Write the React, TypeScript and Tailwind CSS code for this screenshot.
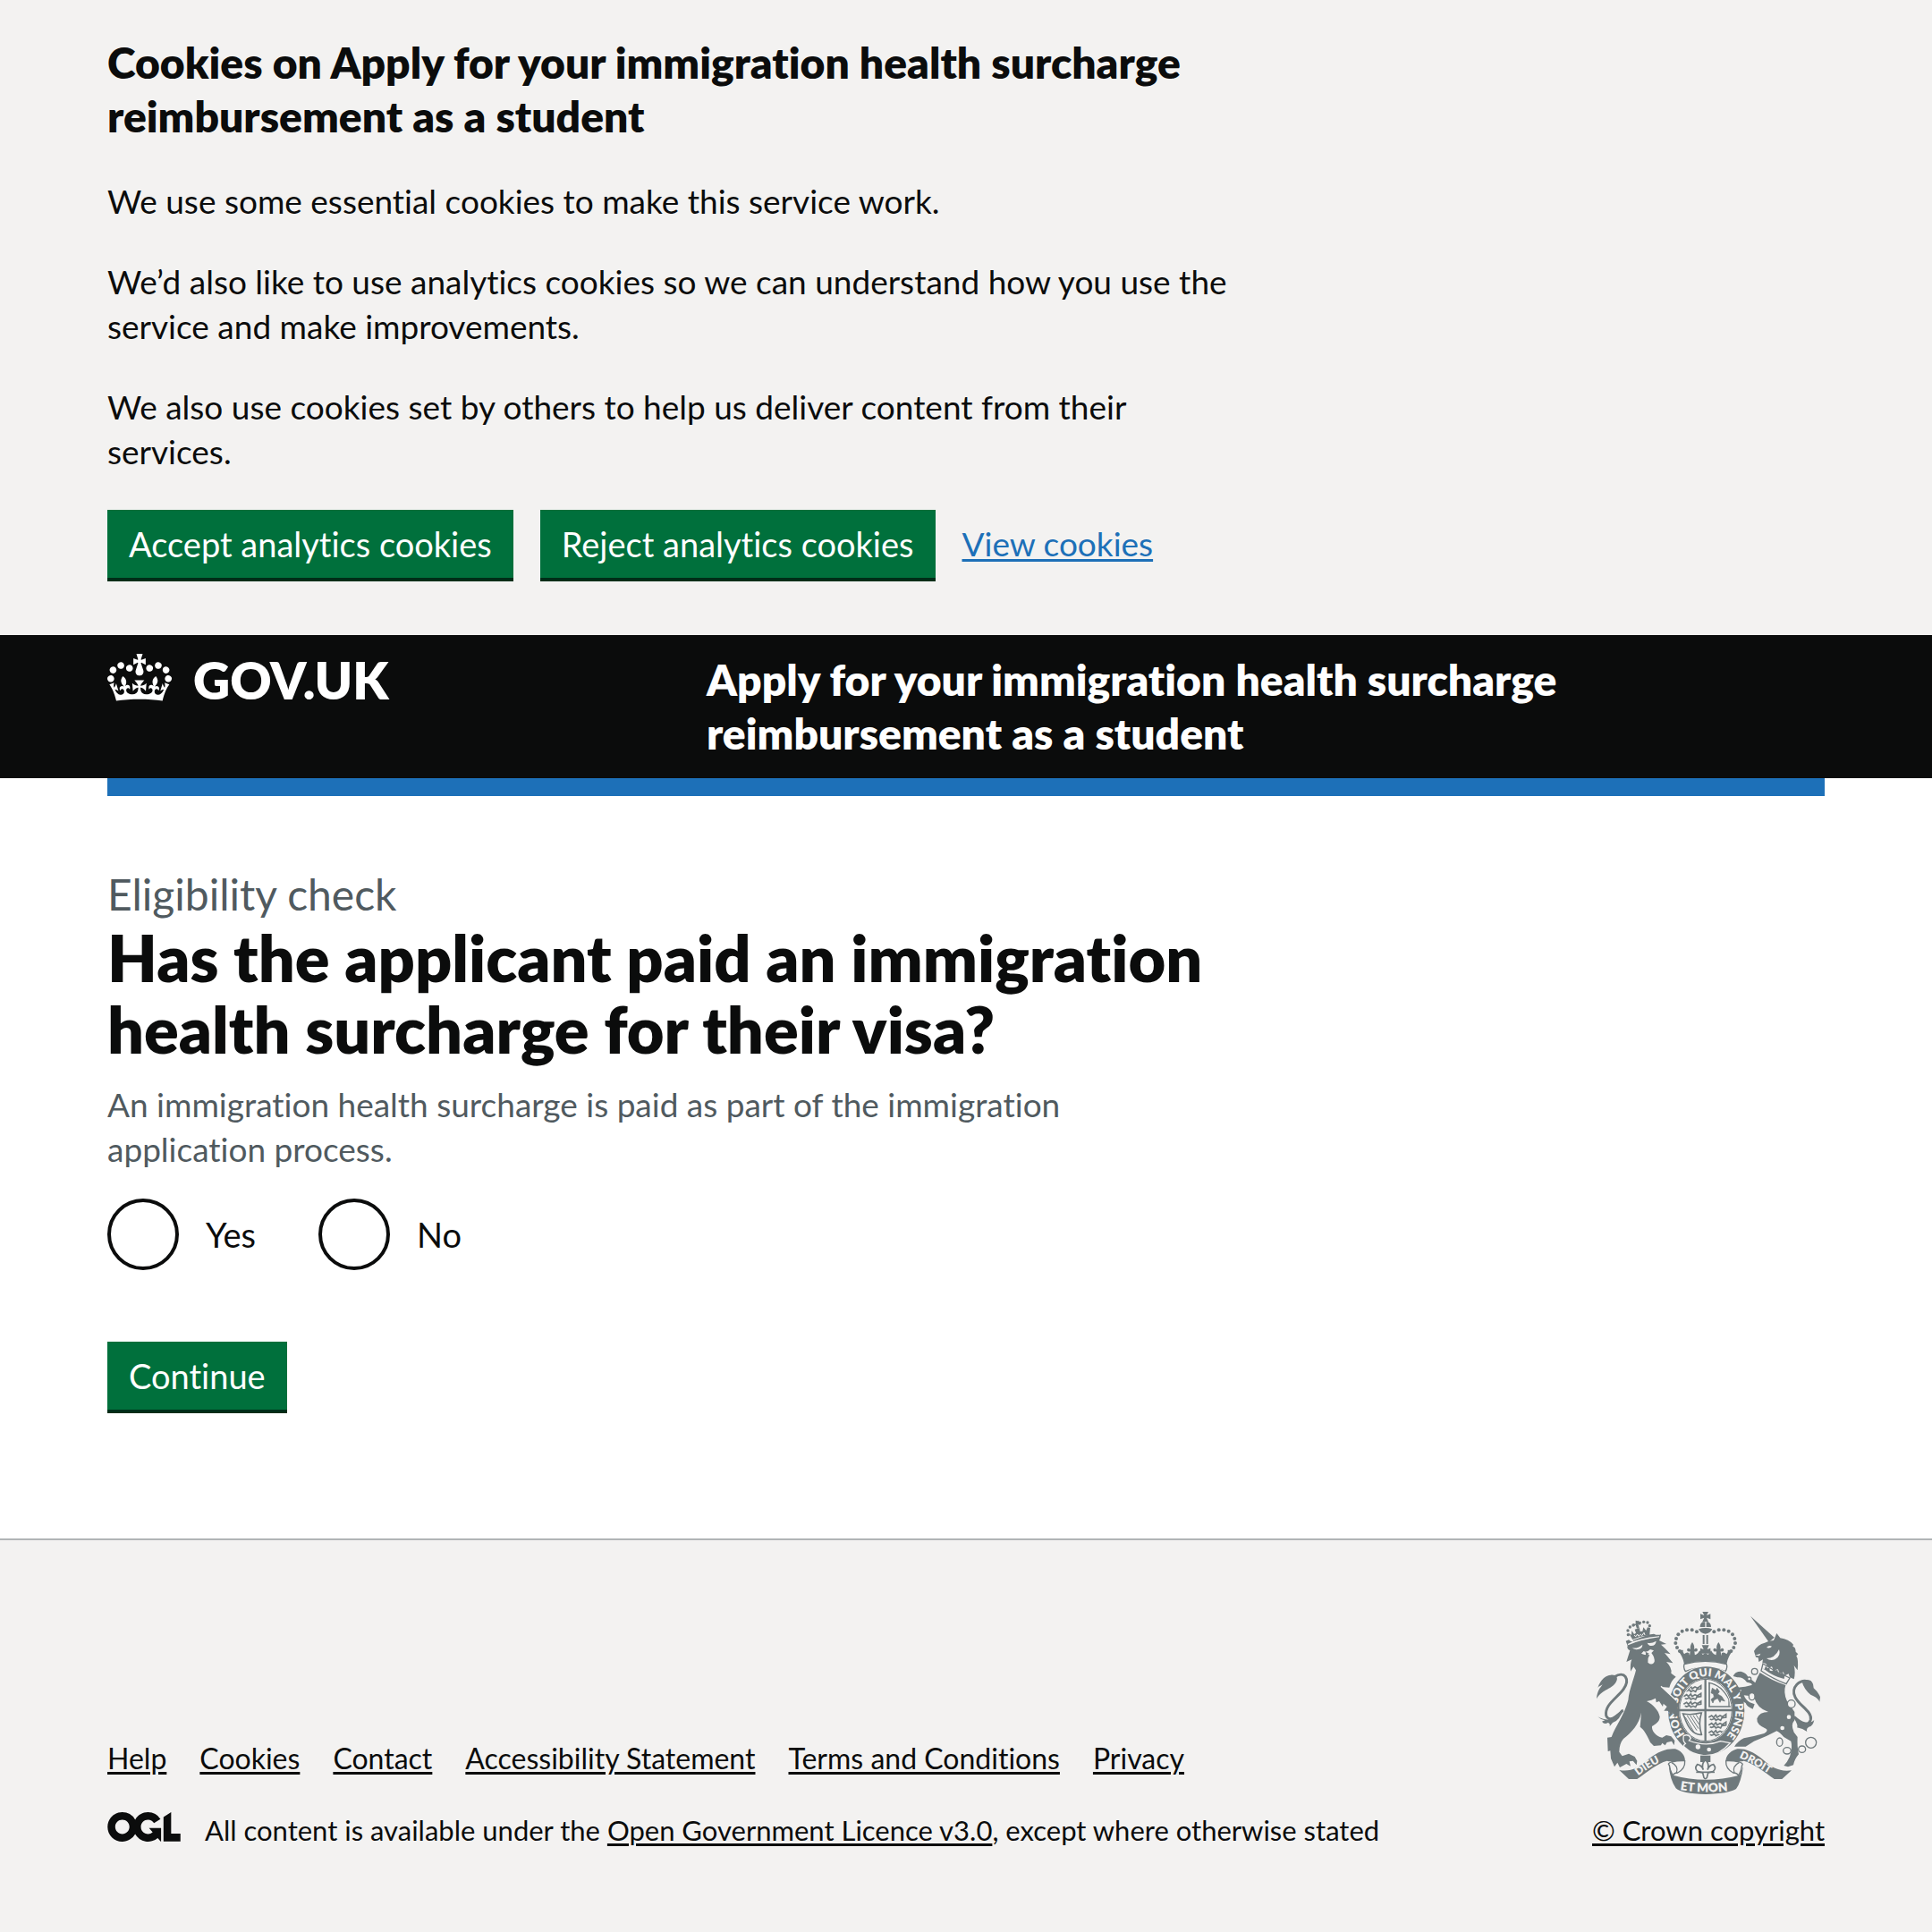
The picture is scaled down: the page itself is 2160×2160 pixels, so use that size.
import type { ReactNode } from "react";

const CROWN =
  "M25 30.2c3.5 1.5 7.7-.2 9.1-3.7 1.5-3.6-.2-7.8-3.9-9.2-3.6-1.4-7.6.3-9.1 3.9-1.4 3.5.3 7.5 3.9 9zM9 39.5c3.6 1.5 7.8-.2 9.2-3.7 1.5-3.6-.2-7.8-3.9-9.1-3.6-1.5-7.6.2-9.1 3.8-1.4 3.5.3 7.5 3.8 9zM4.4 57.2c3.5 1.5 7.7-.2 9.1-3.8 1.5-3.6-.2-7.7-3.9-9.1-3.5-1.5-7.6.3-9.1 3.8-1.4 3.5.3 7.6 3.9 9.1zm38.3-21.4c3.5 1.5 7.7-.2 9.1-3.8 1.5-3.6-.2-7.7-3.9-9.1-3.6-1.5-7.6.3-9.1 3.8-1.3 3.6.4 7.7 3.9 9.1zm64.4-5.6c-3.6 1.5-7.8-.2-9.1-3.7-1.5-3.6.2-7.8 3.8-9.2 3.6-1.4 7.7.3 9.2 3.9 1.3 3.5-.4 7.5-3.9 9zm15.9 9.3c-3.6 1.5-7.7-.2-9.1-3.7-1.5-3.6.2-7.8 3.7-9.1 3.6-1.5 7.7.2 9.2 3.8 1.5 3.5-.3 7.5-3.8 9zm4.7 17.7c-3.6 1.5-7.8-.2-9.2-3.8-1.5-3.6.2-7.7 3.9-9.1 3.6-1.5 7.7.3 9.2 3.8 1.3 3.5-.4 7.6-3.9 9.1zM89.3 35.8c-3.6 1.5-7.8-.2-9.2-3.8-1.4-3.6.2-7.7 3.9-9.1 3.6-1.5 7.7.3 9.2 3.8 1.4 3.6-.3 7.7-3.9 9.1zM69.7 17.7l8.9 4.7V9.3l-8.9 2.8c-.2-.3-.5-.6-.9-.9L72.4 0H59.6l3.5 11.2c-.3.3-.6.5-.9.9l-8.8-2.8v13.1l8.8-4.7c.3.3.6.7.9.9l-5 15.4v.1c-.2.8-.4 1.6-.4 2.4 0 4.1 3.1 7.5 7 8.1h.2c.3 0 .7.1 1 .1.4 0 .7 0 1-.1h.2c4-.6 7.1-4.1 7.1-8.1 0-.8-.1-1.7-.4-2.4V34l-5.1-15.4c.4-.2.7-.6 1-.9zM66 92.8c16.9 0 32.8 1.1 47.1 3.2 4-16.9 8.9-26.7 14-33.5l-9.6-3.4c1 4.9 1.1 7.2 0 10.2-1.5-1.4-3-4.3-4.2-8.7L108.6 76c2.8-2 5-3.2 7.5-3.3-4.4 9.4-10 11.9-13.6 11.2-4.3-.8-6.3-4.6-5.6-7.9 1-4.7 5.7-5.9 8-.5 4.3-8.7-3-11.4-7.6-8.8 7.1-7.2 7.9-13.5 2.1-21.1-8 6.1-8.1 12.3-4.5 20.8-4.7-5.4-12.1-2.5-9.5 6.2 3.4-5.2 7.9-2 7.2 3.1-.6 4.3-6.4 7.8-13.5 7.2-10.3-.9-10.9-8-11.2-13.8 2.5-.5 7.1 1.8 11 7.3L80.2 60c-4.1 4.4-8 5.3-12.3 5.4 1.4-4.4 8-11.6 8-11.6H55.5s6.4 7.2 7.9 11.6c-4.2-.1-8-1-12.3-5.4l1.4 16.4c3.9-5.5 8.5-7.7 10.9-7.3-.3 5.8-.9 12.8-11.1 13.8-7.2.6-12.9-2.9-13.5-7.2-.7-5 3.8-8.3 7.1-3.1 2.7-8.7-4.6-11.6-9.4-6.2 3.7-8.5 3.6-14.7-4.6-20.8-5.8 7.6-5 13.9 2.2 21.1-4.7-2.6-11.9.1-7.7 8.8 2.3-5.5 7.1-4.2 8.1.5.7 3.3-1.3 7.1-5.7 7.9-3.5.7-9-1.8-13.5-11.2 2.5.1 4.7 1.3 7.5 3.3l-4.7-15.4c-1.2 4.4-2.7 7.2-4.3 8.7-1.1-3-.9-5.3 0-10.2l-9.5 3.4c5 6.9 9.9 16.7 14 33.5 14.8-2.1 30.8-3.2 47.7-3.2z";

const OGL_MARK =
  "M421.5 142.8V.1l-50.7 32.3v161.1h112.4v-50.7zm-122.3-9.6A47.12 47.12 0 0 1 221 97.8c0-26 21.1-47.1 47.1-47.1 16.7 0 31.4 8.7 39.7 21.8l42.7-27.2A97.63 97.63 0 0 0 268.1 0c-36.5 0-68.3 20.1-85.1 49.7A98 98 0 0 0 97.8 0C43.9 0 0 43.9 0 97.8s43.9 97.8 97.8 97.8c36.5 0 68.3-20.1 85.1-49.7a97.76 97.76 0 0 0 149.6 25.4l19.4 22.2h3v-87.8h-80l24.3 27.5zM97.8 145c-26 0-47.1-21.1-47.1-47.1s21.1-47.1 47.1-47.1 47.1 21.1 47.1 47.1S123.8 145 97.8 145";

const INK = "#6f797c";
const PAPER = "#f3f2f1";

const CROWN_PEARLS = [
  [408, 133], [392, 127], [375, 127], [359, 131], [346, 142], [339, 156], [337, 171], [342, 186], [351, 198],
];
const CHAIN = [
  [602, 266, 10, 10], [584, 291, 6, 6], [593, 350, 10, 12], [725, 375, 13, 13], [717, 419, 9, 9], [695, 456, 9, 9],
  [686, 503, 10, 14], [711, 532, 13, 11], [761, 527, 12, 11], [791, 505, 18, 18],
];

function SmallCrown() {
  return (
    <g fill={INK}>
      {[[178, 143], [177, 129], [184, 117], [195, 111], [217, 103], [230, 100], [243, 102], [250, 113]].map(([x, y]) => (
        <circle key={`${x}-${y}`} cx={x} cy={y} r="5" />
      ))}
      <path d="M203 95l7 2 4-2-1 8 7-2-2 10-6-3 3 12-8 2-4-12-6 5-2-9 8 1z" />
      <path d="M180 137l9 7 1-15 8 12 6-4-4-12 16-5 2 12 8-1 3-13 9 11 5-11 9 2-3 31q-28 2-53 14z" />
      <path d="M198 145l6 4 5-8 4 7 7-6 4 4 7-10 3 8" fill="none" stroke={PAPER} strokeWidth="3" />
      <path d="M193 160q27-12 58-14" fill="none" stroke={PAPER} strokeWidth="3" />
    </g>
  );
}

function Lion() {
  return (
    <g fill={INK}>
      <path d="M132 284C166 262 186 292 162 326C140 356 98 378 104 414C112 438 142 418 160 396" fill="none" stroke={INK} strokeWidth="9" />
      <path d="M72 358C74 330 84 322 92 310C78 320 74 318 76 320C86 292 104 278 120 278C136 276 146 286 138 300C126 326 92 324 72 358z" />
      <path d="M76 418Q104 432 118 426L162 392Q150 430 126 438L116 450Q118 440 110 438Q98 446 90 434L100 430Q86 428 76 418z" />
      <path d="M180 160Q186 168 196 166Q234 142 264 140Q276 146 288 142Q288 154 282 162L306 174L288 176Q300 186 320 208L300 204L328 238L306 234Q326 254 322 272L338 284Q322 296 316 320L290 318L340 366L346 400L334 426Q336 410 326 404L318 418Q318 400 310 398L298 398L308 384L296 374L294 384L282 366L272 370L270 356L256 362L240 366C262 378 280 396 284 418C284 436 268 444 258 450C256 464 270 484 292 488L306 480L322 484L334 498L332 514L324 500L308 504L302 514L292 506L288 514L264 516L252 504C242 482 232 462 218 452L222 404C214 444 190 470 162 492Q148 508 148 536L158 550L180 542L200 552L208 566L206 580L194 566L182 568L186 584L172 576L150 588L142 572L132 586L120 558L118 532L110 534L108 488L122 486C136 448 166 410 178 362C182 324 198 290 204 262L196 250L186 266Q184 240 190 226L172 234L184 196Q172 190 176 180L170 164z" />
      <path d="M288 316L340 364" stroke={PAPER} strokeWidth="4" />
      <g fill={PAPER}>
        <path d="M190 186Q206 192 226 176Q226 190 210 192Q198 194 190 186z" />
        <path d="M242 170Q256 174 272 164Q270 180 256 180Q246 180 242 170z" />
        <path d="M222 206L230 198Q240 204 252 192L264 196L256 204Q268 220 266 234Q258 248 244 236Q242 222 250 210Q236 212 222 206z" />
        <path d="M176 174Q214 154 282 148L282 151Q216 160 178 178z" />
      </g>
      <path d="M236 200L238 216L248 206z" />
    </g>
  );
}

function Unicorn() {
  return (
    <g fill={INK}>
      <path d="M588 80L668 152L650 168z" />
      <path d="M600 198Q612 176 636 170L650 164L666 162L676 138L688 154Q716 158 732 176L730 182Q740 184 740 200L748 208L742 214Q750 226 746 262L734 246Q740 270 734 292L720 286L716 274L704 280L698 268L686 272L680 258L666 264L660 250L648 254L640 240L628 236L630 226L616 234L614 220L606 218z" />
      <path d="M642 186Q650 176 660 182Q654 190 642 186zM642 222Q670 222 684 192Q692 214 670 226Q654 232 642 222zM604 212L622 206L618 214z" fill={PAPER} />
      <path d="M630 240Q672 268 720 288L708 308Q662 290 624 264z" fill={PAPER} stroke={INK} strokeWidth="4" />
      <path d="M634 260l5-12 7 8 6-4 1 11 8 2 6-10 7 8 5-4 1 11 9 4 6-8 4 11 6-8-4 22q-34-6-71-35z" />
      <path d="M620 270Q662 298 706 312Q698 336 710 364Q724 384 736 402L736 430Q722 444 734 470L746 486Q744 520 750 544Q736 560 732 580L714 586L700 582Q712 570 720 552Q730 520 724 500L700 486Q684 468 676 466Q640 486 600 500L572 518L534 518Q546 500 566 490Q600 484 634 474Q650 464 640 458Q608 446 610 424Q618 402 648 402Q610 390 600 352Q586 348 566 346Q572 362 586 370L602 376L596 392Q576 384 572 372L558 364L552 340L558 328Q540 332 536 318Q560 322 592 312Q598 306 576 302Q562 284 544 286L530 282Q536 266 556 266Q574 270 580 284L604 304Q610 286 620 270z" />
      <path d="M790 302C752 286 722 322 738 352C752 382 796 400 790 428C784 452 758 440 734 418" fill="none" stroke={INK} strokeWidth="9" />
      <path d="M760 298Q800 286 800 322Q816 336 822 352L820 368Q812 352 790 344Q768 328 760 298zM730 416Q756 440 774 440Q798 436 802 428Q798 450 784 452Q774 458 778 468Q764 458 744 454Q750 446 730 416z" />
      <g fill={PAPER} stroke={INK} strokeWidth="4">
        {CHAIN.map(([x, y, rx, ry]) => (
          <ellipse key={`${x}-${y}`} cx={x} cy={y} rx={rx} ry={ry} />
        ))}
      </g>
    </g>
  );
}

function StateCrown() {
  return (
    <g fill={INK}>
      <path d="M427 66h20l-6 12 13-5v18l-13-5 6 13h-20l6-13-13 5V73l13 5zM428 100h8v17h-17q0-12 9-17zM440 100h6q10 5 10 17h-16zM414 124q23-8 46 0q-6 14-23 16q-17-2-23-16zM428 144h6v30h-6zM440 144h6v30h-6zM425 178h24l-6 14 11-4v18h-34v-18l11 4z" />
      {CROWN_PEARLS.map(([x, y]) => (
        <g key={x}>
          <circle cx={x} cy={y} r="6" />
          <circle cx={874 - x} cy={y} r="6" />
        </g>
      ))}
      {[393, 481].map((x) => (
        <path key={x} transform={`translate(${x} 168)`} d="M0 0Q9 12 6 24Q16 16 18 26Q16 34 7 31L9 46H-9L-7 31Q-16 34-18 26Q-16 16-6 24Q-9 12 0 0z" />
      ))}
      <path d="M344 196L362 194Q360 202 366 208Q374 200 382 204L384 212Q408 216 418 196L428 210L437 204L446 210L456 196Q466 216 490 212L492 204Q500 200 508 208Q514 202 512 194L530 196Q512 216 508 242Q437 222 366 242Q362 216 344 196z" />
      <path d="M366 242Q437 222 508 242Q512 252 504 266Q437 238 370 266Q362 252 366 242z" fill={PAPER} stroke={INK} strokeWidth="4" />
    </g>
  );
}

function RoyalShield() {
  return (
    <g>
      <ellipse cx="440" cy="398" rx="132" ry="151" fill={PAPER} />
      <ellipse cx="440" cy="398" rx="128" ry="148" fill={INK} />
      <ellipse cx="438" cy="396" rx="90" ry="106" fill={PAPER} />
      <clipPath id="shield-face">
        <ellipse cx="438" cy="396" rx="84" ry="100" />
      </clipPath>
      <g clipPath="url(#shield-face)" fill="none" stroke={INK} strokeWidth="5">
        {[318, 344, 370].map((y) => (
          <path key={y} d={`M364 ${y + 6}l10-6 6 6 8-8 4 8 10-6 8 4 12-8v10l-14 2-4 8-8-4-8 4-4-6-10 4-6-2`} />
        ))}
        {[416, 442, 468].map((y) => (
          <path key={y} d={`M448 ${y + 4}l10-6 6 6 8-8 4 8 10-6 8 4 12-8v10l-14 2-4 8-8-4-8 4-4-6-10 4-6-2`} />
        ))}
        <path d="M450 302V384H524" />
        <path d="M448 304Q490 310 516 360V384" strokeWidth="4" />
        <path d="M460 322l12 8 4-8 8 12-6 8 14 8 10 16-12-4-4 8-8-14-12 6-4 10-6-12 10-8-2-10-8-4z" fill={INK} strokeWidth="2" />
        <path d="M362 408Q392 414 424 404Q412 440 424 478Q388 482 366 418z" strokeWidth="5" />
        <path d="M376 414l32 50M386 414l28 44M396 414l20 30M406 412l10 16M370 420l30 52" strokeWidth="3" />
      </g>
      <path d="M437 290V500M348 396H528" stroke={PAPER} strokeWidth="14" />
      <path d="M437 290V500M348 396H528" stroke={INK} strokeWidth="7" />
      <ellipse cx="438" cy="396" rx="88" ry="104" fill="none" stroke={INK} strokeWidth="3" />
      <path id="garter-line" d="M390 498A98 116 0 1 1 490 498" fill="none" />
      <text fill={PAPER} fontFamily="Lato, sans-serif" fontWeight="800" fontSize="37">
        <textPath href="#garter-line" startOffset="30">HONI SOIT QUI MAL Y PENSE</textPath>
      </text>
      <path d="M364 482Q380 474 388 490L382 498Q440 520 488 500L520 506Q480 552 430 548Q390 542 372 524Q358 516 370 508Q360 500 364 482z" fill={INK} stroke={PAPER} strokeWidth="4" />
      <circle cx="412" cy="519" r="8" fill={PAPER} />
      <circle cx="449" cy="528" r="7" fill={PAPER} />
    </g>
  );
}

function MottoRibbon() {
  return (
    <g fill={INK}>
      <path d="M420 548h34v22h-34z" />
      <path d="M437 562Q452 578 444 596Q450 580 464 578Q476 592 462 602L446 606L442 622Q437 630 432 622L428 606L412 602Q398 592 410 578Q424 580 430 596Q422 578 437 562z" fill={PAPER} stroke={INK} strokeWidth="5" />
      <path d="M406 604h62" stroke={INK} strokeWidth="5" />
      <path d="M148 597C184 604 214 590 244 562C280 532 310 524 336 526C362 534 372 556 368 574L350 568C334 566 320 570 308 566C276 574 244 602 208 627H180z" />
      <path d="M726 598C690 604 660 590 630 562C596 532 566 524 544 526C514 534 502 556 506 574L524 568C540 566 554 570 566 566C598 574 634 602 668 627H694z" />
      <path d="M368 566Q370 592 344 606Q330 606 328 616Q318 600 316 580Q308 576 322 570Q350 564 368 566z" fill={PAPER} stroke={INK} strokeWidth="4" />
      <path d="M506 566Q504 592 530 606Q544 606 548 616Q558 600 560 580Q566 576 552 570Q524 564 506 566z" fill={PAPER} stroke={INK} strokeWidth="4" />
      <path d="M324 572Q348 584 340 606M550 572Q526 584 534 606" fill="none" stroke={INK} strokeWidth="4" />
      <path d="M314 580Q322 600 328 614Q437 644 552 614Q558 600 564 584Q556 640 540 660Q516 676 437 678Q358 676 338 658Q318 630 314 580z" />
      <path id="motto-left" d="M212 616Q260 578 326 550" fill="none" />
      <path id="motto-mid" d="M352 663Q437 678 540 663" fill="none" />
      <path id="motto-right" d="M550 555Q606 578 686 634" fill="none" />
      <g fill={PAPER} fontFamily="Lato, sans-serif" fontWeight="800">
        <text fontSize="36"><textPath href="#motto-left">DIEU</textPath></text>
        <text fontSize="41"><textPath href="#motto-mid">ET MON</textPath></text>
        <text fontSize="36"><textPath href="#motto-right">DROIT</textPath></text>
      </g>
    </g>
  );
}

function RoyalArms() {
  return (
    <svg viewBox="72 66 750 612" aria-hidden="true" className="h-[204px] w-[250px]">
      <SmallCrown />
      <StateCrown />
      <RoyalShield />
      <Lion />
      <Unicorn />
      <MottoRibbon />
    </svg>
  );
}

function Container({ children, className = "" }: { children: ReactNode; className?: string }) {
  return (
    <div className="px-[120px]">
      <div className={`mx-auto max-w-[1920px] ${className}`}>{children}</div>
    </div>
  );
}

function GreenButton({ children, type = "button" }: { children: ReactNode; type?: "button" | "submit" }) {
  return (
    <button
      type={type}
      className="h-[76px] cursor-pointer bg-[#00703c] px-6 text-[38px] leading-[38px] text-white shadow-[0_4px_0_#002d18]"
    >
      {children}
    </button>
  );
}

function Radio({ value, label }: { value: string; label: string }) {
  return (
    <div className="flex items-center">
      <input
        id={`paid-${value}`}
        type="radio"
        name="paid"
        value={value}
        className="size-20 appearance-none rounded-full border-4 border-[#0b0c0c] bg-transparent checked:bg-[#0b0c0c] checked:shadow-[inset_0_0_0_16px_white]"
      />
      <label htmlFor={`paid-${value}`} className="px-[30px] text-[38px] leading-[50px]">
        {label}
      </label>
    </div>
  );
}

const LINK = "underline decoration-[3px] underline-offset-[3px]";
const FOOTER_LINKS = ["Help", "Cookies", "Contact", "Accessibility Statement", "Terms and Conditions", "Privacy"];

export default function App() {
  return (
    <div className="flex min-h-screen flex-col bg-white font-['Lato',sans-serif] text-[#0b0c0c] antialiased [font-variant-ligatures:none]">
      <section aria-label="Cookies" className="bg-[#f3f2f1] pt-10 pb-[60px]">
        <Container>
          <div className="w-2/3">
            <h2 className="mb-10 text-[48px] leading-[60px] font-extrabold">
              Cookies on Apply for your immigration health surcharge reimbursement as a student
            </h2>
            <div className="space-y-10 text-[37px] leading-[50px]">
              <p>We use some essential cookies to make this service work.</p>
              <p>We’d also like to use analytics cookies so we can understand how you use the service and make improvements.</p>
              <p>We also use cookies set by others to help us deliver content from their services.</p>
            </div>
          </div>
          <div className="mt-10 mb-1 flex items-center gap-[30px]">
            <GreenButton>Accept analytics cookies</GreenButton>
            <GreenButton>Reject analytics cookies</GreenButton>
            <a href="#cookies" className={`text-[37px] leading-[50px] text-[#1d70b8] ${LINK}`}>
              View cookies
            </a>
          </div>
        </Container>
      </section>

      <header className="bg-[#0b0c0c] text-white">
        <Container className="flex">
          <div className="w-1/3 pt-5">
            <a href="#home" className="flex items-start gap-6">
              <svg viewBox="0 0 132 97" aria-hidden="true" className="mt-px h-[53px] w-[72px]" fill="currentColor">
                <path d={CROWN} />
              </svg>
              <span className="text-[57px] leading-[60px] font-extrabold">GOV.UK</span>
            </a>
          </div>
          <div className="w-2/3 py-5 pl-[30px]">
            <a href="#service" className="block text-[48px] leading-[60px] font-extrabold">
              Apply for your immigration health surcharge reimbursement as a student
            </a>
          </div>
        </Container>
        <div className="bg-white">
          <Container>
            <div className="h-5 bg-[#1d70b8]" />
          </Container>
        </div>
      </header>

      <main>
        <Container className="pt-20 pb-[140px]">
          <form>
            <fieldset>
              <legend className="w-2/3">
                <span className="block text-[48px] leading-[60px] text-[#505a5f]">Eligibility check</span>
                <h1 className="text-[72px] leading-[80px] font-extrabold">
                  Has the applicant paid an immigration health surcharge for their visa?
                </h1>
              </legend>
              <p className="mt-5 w-3/5 text-[37px] leading-[50px] text-[#505a5f]">
                An immigration health surcharge is paid as part of the immigration application process.
              </p>
              <div className="mt-[30px] flex gap-10">
                <Radio value="yes" label="Yes" />
                <Radio value="no" label="No" />
              </div>
            </fieldset>
            <div className="mt-20 mb-1">
              <GreenButton type="submit">Continue</GreenButton>
            </div>
          </form>
        </Container>
      </main>

      <footer className="grow border-t-2 border-[#b1b4b6] bg-[#f3f2f1] pt-20 pb-[94px]">
        <Container className="flex items-end justify-between text-[31px] leading-[40px]">
          <div>
            <ul className="mb-10 flex gap-[37px] text-[32px]">
              {FOOTER_LINKS.map((name) => (
                <li key={name} className="leading-[40px]">
                  <a href="#footer" className={LINK}>{name}</a>
                </li>
              ))}
            </ul>
            <div className="flex items-start gap-[27px]">
              <svg viewBox="0 0 483.2 195.7" role="img" aria-label="Open Government Licence" className="h-[33px] w-[82px]" fill="currentColor">
                <path d={OGL_MARK} />
              </svg>
              <span>
                All content is available under the <a href="#licence" className={LINK}>Open Government Licence v3.0</a>, except where otherwise stated
              </span>
            </div>
          </div>
          <a href="#copyright" className={`flex flex-col items-center gap-5 ${LINK}`}>
            <RoyalArms />
            <span>© Crown copyright</span>
          </a>
        </Container>
      </footer>
    </div>
  );
}
